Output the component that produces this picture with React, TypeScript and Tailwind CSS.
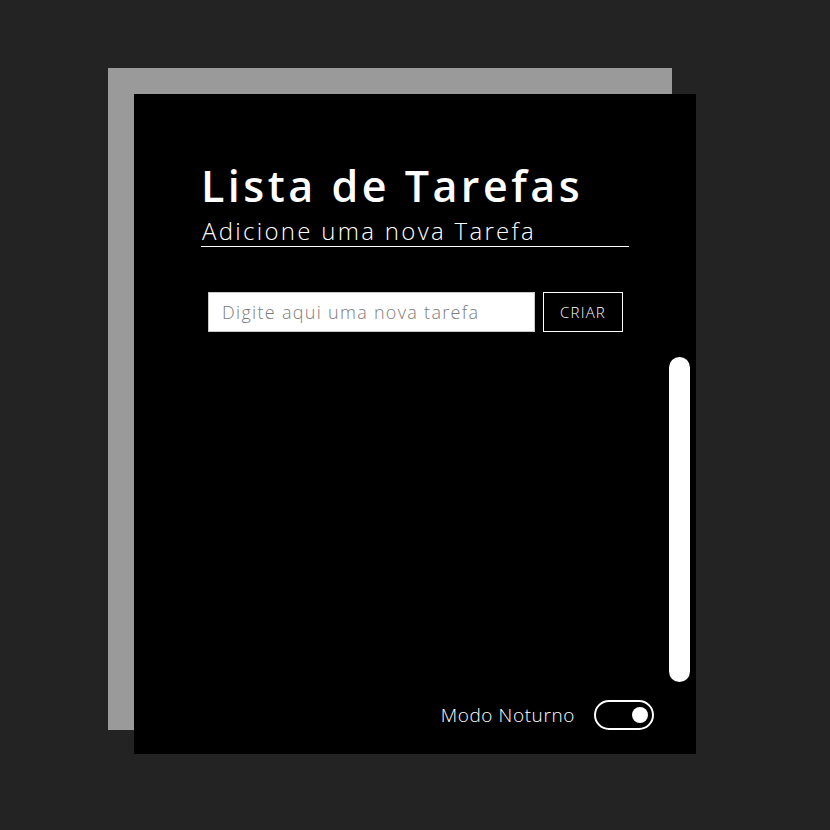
import React from "react";

export default function App() {
  return (
    <div
      className="min-h-screen w-full bg-[#232323] pt-[94px] pl-[134px]"
      style={{ fontFamily: "'Open Sans', 'Noto Sans', sans-serif" }}
    >
      <div className="w-[562px] h-[660px] bg-black shadow-[-25px_-25px_0_1px_#9a9a9a] flex flex-col">
        <div className="pl-[67px] pt-[70px]">
          <h1 className="text-[43px] leading-[44px] font-semibold text-white tracking-[3.5px]">
            Lista de Tarefas
          </h1>
          <h2 className="mt-[8px] w-[428px] border-b border-white text-[24px] leading-[30px] text-white font-light tracking-[2.3px] pl-px">
            Adicione uma nova Tarefa
          </h2>
        </div>
        <div className="flex pl-[74px] mt-[45px] gap-[8px]">
          <input
            className="w-[327px] h-[40px] bg-white border border-[#c8c8c8] px-[13px] text-[18px] font-light tracking-[1.3px] text-black placeholder:text-[#7c7c7c] outline-none"
            placeholder="Digite aqui uma nova tarefa"
          />
          <button className="w-[80px] h-[40px] border border-white bg-black text-white text-[15px] font-light tracking-[1.2px]">
            CRIAR
          </button>
        </div>
        <div className="flex flex-1 mt-[25px]">
          <div className="flex-1" />
          <div className="w-[21px] h-[325px] rounded-full bg-white mr-[6px]" />
        </div>
        <div className="flex items-center justify-end pr-[42px] pb-[24px] gap-[19px]">
          <span className="text-white text-[19px] font-light tracking-[0.6px]">Modo Noturno</span>
          <div className="w-[60px] h-[30px] rounded-full border-2 border-white flex items-center justify-end pr-[4px]">
            <div className="w-[16px] h-[16px] rounded-full bg-white" />
          </div>
        </div>
      </div>
    </div>
  );
}
